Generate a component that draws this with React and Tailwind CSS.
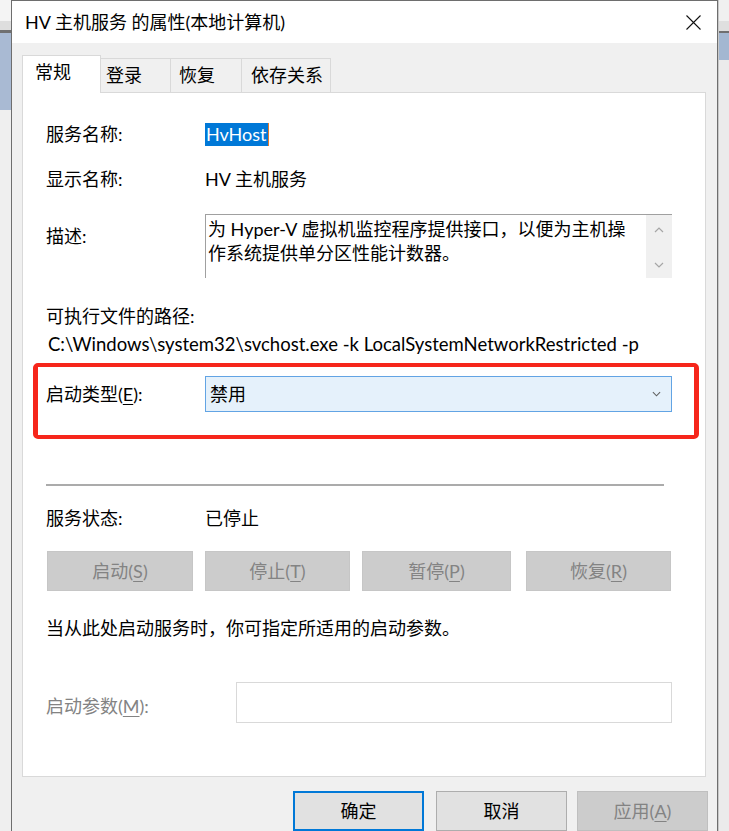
import React from "react";

const Mn = ({ children }) => (
  <span className="underline underline-offset-[3px] decoration-1">{children}</span>
);

const Chevron = ({ up = false, className = "" }) => (
  <svg className={className} width="10" height="6" viewBox="0 0 10 6" fill="none">
    <polyline
      points={up ? "1,5 5,1 9,5" : "1,1 5,5 9,1"}
      stroke="currentColor"
      strokeWidth="1.2"
    />
  </svg>
);

const Tabs = () => (
  <div className="flex items-end h-[37px]">
    <div className="relative z-10 -mb-px w-[79px] h-[38px] bg-white border border-b-0 border-[#d9d9d9] flex items-center pl-[12px] pb-[4px]">
      常规
    </div>
    <div className="w-[70px] h-[34px] border-t border-r border-[#d9d9d9] flex items-center pl-[5px]">
      登录
    </div>
    <div className="w-[71px] h-[34px] border-t border-r border-[#d9d9d9] flex items-center pl-[8px]">
      恢复
    </div>
    <div className="w-[89px] h-[34px] border-t border-r border-[#d9d9d9] flex items-center pl-[9px]">
      依存关系
    </div>
  </div>
);

const DisabledBtn = ({ label, mn, className }) => (
  <div
    className={`h-[40px] bg-[#cccccc] border border-[#c6c6c6] text-[#838383] flex items-center justify-center ${className}`}
  >
    {label}(<Mn>{mn}</Mn>)
  </div>
);

const Panel = () => (
  <div className="h-[685px] bg-white border border-[#d9d9d9] pl-[23px] pr-[32px] pt-[29px]">
    <div className="flex items-center h-6">
      <div className="w-[159px]">服务名称:</div>
      <span className="h-[23px] leading-[23px] px-px bg-[#0078d7] text-white border-r border-[#e07a2e]">
        HvHost
      </span>
    </div>

    <div className="flex items-center h-6 mt-[21px]">
      <div className="w-[159px]">显示名称:</div>
      <div>HV 主机服务</div>
    </div>

    <div className="flex items-start mt-[23px]">
      <div className="w-[159px] mt-[10px] leading-6">描述:</div>
      <div className="w-[467px] h-[64px] border-t border-l border-[#a0a0a0] flex">
        <div className="flex-1 pl-[2px] pt-[2px] leading-6 whitespace-nowrap">
          为 Hyper-V 虚拟机监控程序提供接口，以便为主机操
          <br />
          作系统提供单分区性能计数器。
        </div>
        <div className="w-[26px] bg-[#f0f0f0] flex flex-col items-center pt-[12px] text-[#a6a6a6]">
          <Chevron up />
          <Chevron className="mt-[29px]" />
        </div>
      </div>
    </div>

    <div className="h-6 leading-6 mt-[26px]">可执行文件的路径:</div>
    <div className="h-6 leading-6 mt-[4px] pl-[2px] whitespace-nowrap text-[18.5px]">
      C:\Windows\system32\svchost.exe -k LocalSystemNetworkRestricted -p
    </div>

    <div className="mt-[7px] -ml-[13px] -mr-[26px] h-[76px] border-x-[5px] border-y-4 border-[#f6261b] rounded-[5px] pl-[8px] pr-[21px] pt-[9px]">
      <div className="flex items-center h-[36px]">
        <div className="w-[159px]">
          启动类型(<Mn>E</Mn>):
        </div>
        <div className="w-[467px] h-[36px] bg-[#e5f1fb] border border-[#62a4e4] flex items-center justify-between pl-[4px] pr-[10px]">
          <span>禁用</span>
          <Chevron className="text-[#606060] w-[9px]" />
        </div>
      </div>
    </div>

    <div className="mt-[45px] w-[618px] h-[2px] bg-[#ababab]" />

    <div className="flex items-center h-6 mt-[20px]">
      <div className="w-[159px]">服务状态:</div>
      <div>已停止</div>
    </div>

    <div className="flex mt-[21px]">
      <DisabledBtn label="启动" mn="S" className="ml-px w-[146px]" />
      <DisabledBtn label="停止" mn="T" className="ml-[12px] w-[145px]" />
      <DisabledBtn label="暂停" mn="P" className="ml-[12px] w-[149px]" />
      <DisabledBtn label="恢复" mn="R" className="ml-[15px] w-[145px]" />
    </div>

    <div className="h-6 leading-6 mt-[25px]">
      当从此处启动服务时，你可指定所适用的启动参数。
    </div>

    <div className="flex items-start mt-[42px]">
      <div className="w-[190px] mt-[12px] leading-6 text-[#838383]">
        启动参数(<Mn>M</Mn>):
      </div>
      <div className="w-[436px] h-[41px] border border-[#d9d9d9] bg-white" />
    </div>
  </div>
);

const Footer = () => (
  <div className="flex justify-end mt-[14px] -mr-[2px]">
    <div className="w-[131px] h-[40px] bg-[#e1e1e1] border-2 border-[#0078d7] flex items-center justify-center">
      确定
    </div>
    <div className="ml-[12px] w-[131px] h-[40px] bg-[#e1e1e1] border border-[#adadad] flex items-center justify-center">
      取消
    </div>
    <div className="ml-[10px] w-[131px] h-[40px] bg-[#cccccc] border border-[#bfbfbf] text-[#838383] flex items-center justify-center">
      应用(<Mn>A</Mn>)
    </div>
  </div>
);

const LeftStrip = () => (
  <div className="w-[11px] flex flex-col">
    <div className="h-[21px] bg-[#f4f4f4]" />
    <div className="h-[9px] bg-[#dedede]" />
    <div className="h-[3px] bg-[#707070]" />
    <div className="h-[77px] bg-[#a9bad3]" />
    <div className="flex-1 bg-[#efefef]" />
  </div>
);

const RightStrip = () => (
  <div className="w-[11px] flex flex-col border-l border-[#c8c8c8]">
    <div className="h-[21px] bg-[#f0f0f0]" />
    <div className="h-[10px] bg-[#dfdfdf]" />
    <div className="h-[2px] bg-[#6f6f6f]" />
    <div className="h-[27px] bg-[#a3b7d1]" />
    <div className="flex-1 bg-[#ebebeb]" />
  </div>
);

export default function App() {
  return (
    <div className="w-[729px] h-[831px] overflow-hidden flex font-['Lato','Noto_Sans_CJK_SC',sans-serif] text-[18px] text-black">
      <LeftStrip />
      <div className="w-[707px] border-x border-t border-[#6e6e6e] flex flex-col">
        <div className="h-[46px] bg-white flex items-center justify-between pl-[13px] pr-[16px]">
          <div>HV 主机服务 的属性(本地计算机)</div>
          <svg width="15" height="15" viewBox="0 0 15 15" fill="none">
            <path d="M0.5 0.5L14.5 14.5M14.5 0.5L0.5 14.5" stroke="#111" strokeWidth="1.1" />
          </svg>
        </div>
        <div className="flex-1 bg-[#f0f0f0] pl-[10px] pr-[11px] pt-[12px]">
          <Tabs />
          <Panel />
          <Footer />
        </div>
      </div>
      <RightStrip />
    </div>
  );
}
